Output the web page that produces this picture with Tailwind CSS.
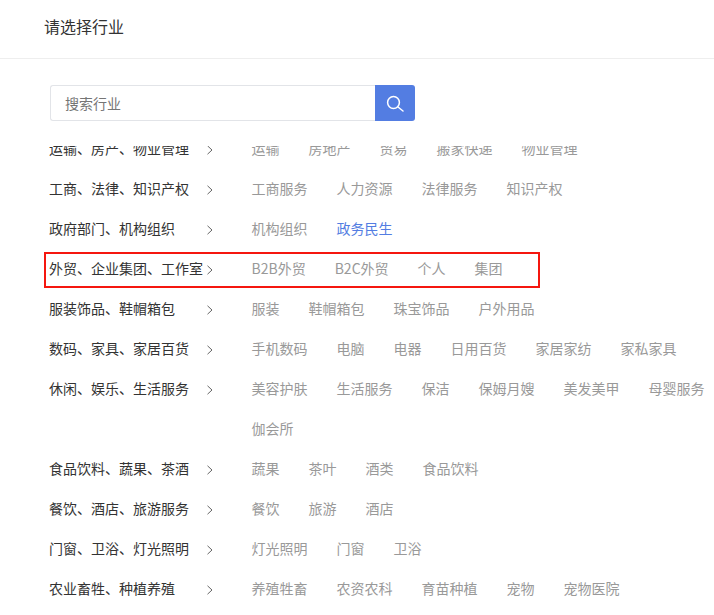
<!DOCTYPE html>
<html lang="zh-CN">
<head>
  <meta charset="UTF-8">
  <title>请选择行业</title>
  <script src="https://cdn.jsdelivr.net/npm/@tailwindcss/browser@4"></script>
</head>
<body class="relative h-[615px] overflow-hidden bg-white font-['Noto_Sans_CJK_SC','Liberation_Sans',sans-serif] text-[#333]">
  <!-- Header -->
  <header class="flex h-[59px] items-center border-b border-[#eee] pb-[7px] pl-[44px] text-base">请选择行业</header>

  <!-- Search -->
  <div class="mt-[26px] ml-[50px] flex h-9 w-[365px]">
    <div class="flex flex-1 items-center rounded-l-[3px] border border-r-0 border-[#e2e4e8] pl-[14px] text-sm text-[#757575]">搜索行业</div>
    <button class="flex w-10 items-center justify-center rounded-r-[3px] bg-[#537de2]">
      <svg class="h-5 w-5" viewBox="0 0 20 20" fill="none" stroke="white" stroke-width="1.5" stroke-linecap="round">
        <circle cx="8.5" cy="9.5" r="5.9"/>
        <path d="M13 14l5 4"/>
      </svg>
    </button>
  </div>

  <!-- Industry list -->
  <div class="mt-[25px] h-[469px] overflow-hidden">
    <div class="-mt-[18px] pl-[49px] text-sm">
      <div class="flex">
        <div class="flex h-10 w-[202.5px] shrink-0 items-center"><span class="w-[155px] shrink-0 whitespace-nowrap">运输、房产、物业管理</span><svg class="mt-[3px] ml-[2px] h-[10px] w-2" viewBox="0 0 8 10" fill="none" stroke="#666"><path d="M1.5 .8L6 5 1.5 9.2"/></svg></div>
        <div class="flex w-[462.5px] flex-wrap gap-x-[29px] text-[#999]"><span class="leading-10">运输</span><span class="leading-10">房地产</span><span class="leading-10">贸易</span><span class="leading-10">搬家快递</span><span class="leading-10">物业管理</span></div>
      </div>
      <div class="flex">
        <div class="flex h-10 w-[202.5px] shrink-0 items-center"><span class="w-[155px] shrink-0 whitespace-nowrap">工商、法律、知识产权</span><svg class="mt-[3px] ml-[2px] h-[10px] w-2" viewBox="0 0 8 10" fill="none" stroke="#666"><path d="M1.5 .8L6 5 1.5 9.2"/></svg></div>
        <div class="flex w-[462.5px] flex-wrap gap-x-[29px] text-[#999]"><span class="leading-10">工商服务</span><span class="leading-10">人力资源</span><span class="leading-10">法律服务</span><span class="leading-10">知识产权</span></div>
      </div>
      <div class="flex">
        <div class="flex h-10 w-[202.5px] shrink-0 items-center"><span class="w-[155px] shrink-0 whitespace-nowrap">政府部门、机构组织</span><svg class="mt-[3px] ml-[2px] h-[10px] w-2" viewBox="0 0 8 10" fill="none" stroke="#666"><path d="M1.5 .8L6 5 1.5 9.2"/></svg></div>
        <div class="flex w-[462.5px] flex-wrap gap-x-[29px] text-[#999]"><span class="leading-10">机构组织</span><span class="leading-10 text-[#537de2]">政务民生</span></div>
      </div>
      <div class="flex">
        <div class="flex h-10 w-[202.5px] shrink-0 items-center"><span class="w-[155px] shrink-0 whitespace-nowrap">外贸、企业集团、工作室</span><svg class="mt-[3px] ml-[2px] h-[10px] w-2" viewBox="0 0 8 10" fill="none" stroke="#666"><path d="M1.5 .8L6 5 1.5 9.2"/></svg></div>
        <div class="flex w-[462.5px] flex-wrap gap-x-[29px] text-[#999]"><span class="leading-10">B2B外贸</span><span class="leading-10">B2C外贸</span><span class="leading-10">个人</span><span class="leading-10">集团</span></div>
      </div>
      <div class="flex">
        <div class="flex h-10 w-[202.5px] shrink-0 items-center"><span class="w-[155px] shrink-0 whitespace-nowrap">服装饰品、鞋帽箱包</span><svg class="mt-[3px] ml-[2px] h-[10px] w-2" viewBox="0 0 8 10" fill="none" stroke="#666"><path d="M1.5 .8L6 5 1.5 9.2"/></svg></div>
        <div class="flex w-[462.5px] flex-wrap gap-x-[29px] text-[#999]"><span class="leading-10">服装</span><span class="leading-10">鞋帽箱包</span><span class="leading-10">珠宝饰品</span><span class="leading-10">户外用品</span></div>
      </div>
      <div class="flex">
        <div class="flex h-10 w-[202.5px] shrink-0 items-center"><span class="w-[155px] shrink-0 whitespace-nowrap">数码、家具、家居百货</span><svg class="mt-[3px] ml-[2px] h-[10px] w-2" viewBox="0 0 8 10" fill="none" stroke="#666"><path d="M1.5 .8L6 5 1.5 9.2"/></svg></div>
        <div class="flex w-[462.5px] flex-wrap gap-x-[29px] text-[#999]"><span class="leading-10">手机数码</span><span class="leading-10">电脑</span><span class="leading-10">电器</span><span class="leading-10">日用百货</span><span class="leading-10">家居家纺</span><span class="leading-10">家私家具</span></div>
      </div>
      <div class="flex">
        <div class="flex h-10 w-[202.5px] shrink-0 items-center"><span class="w-[155px] shrink-0 whitespace-nowrap">休闲、娱乐、生活服务</span><svg class="mt-[3px] ml-[2px] h-[10px] w-2" viewBox="0 0 8 10" fill="none" stroke="#666"><path d="M1.5 .8L6 5 1.5 9.2"/></svg></div>
        <div class="flex w-[462.5px] flex-wrap gap-x-[29px] text-[#999]"><span class="leading-10">美容护肤</span><span class="leading-10">生活服务</span><span class="leading-10">保洁</span><span class="leading-10">保姆月嫂</span><span class="leading-10">美发美甲</span><span class="leading-10">母婴服务</span><span class="leading-10">伽会所</span></div>
      </div>
      <div class="flex">
        <div class="flex h-10 w-[202.5px] shrink-0 items-center"><span class="w-[155px] shrink-0 whitespace-nowrap">食品饮料、蔬果、茶酒</span><svg class="mt-[3px] ml-[2px] h-[10px] w-2" viewBox="0 0 8 10" fill="none" stroke="#666"><path d="M1.5 .8L6 5 1.5 9.2"/></svg></div>
        <div class="flex w-[462.5px] flex-wrap gap-x-[29px] text-[#999]"><span class="leading-10">蔬果</span><span class="leading-10">茶叶</span><span class="leading-10">酒类</span><span class="leading-10">食品饮料</span></div>
      </div>
      <div class="flex">
        <div class="flex h-10 w-[202.5px] shrink-0 items-center"><span class="w-[155px] shrink-0 whitespace-nowrap">餐饮、酒店、旅游服务</span><svg class="mt-[3px] ml-[2px] h-[10px] w-2" viewBox="0 0 8 10" fill="none" stroke="#666"><path d="M1.5 .8L6 5 1.5 9.2"/></svg></div>
        <div class="flex w-[462.5px] flex-wrap gap-x-[29px] text-[#999]"><span class="leading-10">餐饮</span><span class="leading-10">旅游</span><span class="leading-10">酒店</span></div>
      </div>
      <div class="flex">
        <div class="flex h-10 w-[202.5px] shrink-0 items-center"><span class="w-[155px] shrink-0 whitespace-nowrap">门窗、卫浴、灯光照明</span><svg class="mt-[3px] ml-[2px] h-[10px] w-2" viewBox="0 0 8 10" fill="none" stroke="#666"><path d="M1.5 .8L6 5 1.5 9.2"/></svg></div>
        <div class="flex w-[462.5px] flex-wrap gap-x-[29px] text-[#999]"><span class="leading-10">灯光照明</span><span class="leading-10">门窗</span><span class="leading-10">卫浴</span></div>
      </div>
      <div class="flex">
        <div class="flex h-10 w-[202.5px] shrink-0 items-center"><span class="w-[155px] shrink-0 whitespace-nowrap">农业畜牲、种植养殖</span><svg class="mt-[3px] ml-[2px] h-[10px] w-2" viewBox="0 0 8 10" fill="none" stroke="#666"><path d="M1.5 .8L6 5 1.5 9.2"/></svg></div>
        <div class="flex w-[462.5px] flex-wrap gap-x-[29px] text-[#999]"><span class="leading-10">养殖牲畜</span><span class="leading-10">农资农科</span><span class="leading-10">育苗种植</span><span class="leading-10">宠物</span><span class="leading-10">宠物医院</span></div>
      </div>
    </div>
  </div>

  <!-- Red annotation box -->
  <div class="absolute top-[252px] left-[44px] h-9 w-[496px] border-2 border-[#f5170f]"></div>
</body>
</html>
